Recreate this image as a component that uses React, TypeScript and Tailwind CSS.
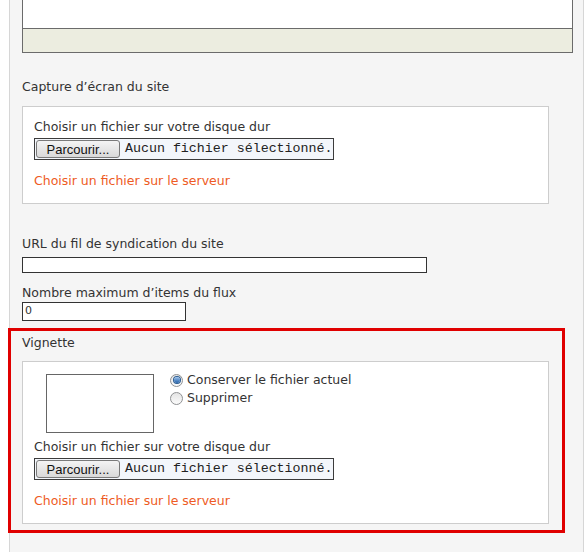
import React from 'react';

function Radio({ checked }: { checked?: boolean }) {
  return (
    <span className="relative inline-flex h-[13px] w-[13px] shrink-0 items-center justify-center rounded-full border border-[#8f9193] bg-gradient-to-b from-[#e4e4e4] to-[#fbfbfb]">
      {checked && (
        <span className="h-[6px] w-[6px] rounded-full bg-gradient-to-b from-[#9cc3ec] to-[#1f5fa8] ring-1 ring-[#2a5c92]" />
      )}
    </span>
  );
}

function FileInput() {
  return (
    <div className="flex h-[22px] w-[300px] items-center border border-[#3c3c3c] bg-[#f3f6fb]">
      <button className="ml-px flex h-[18px] w-[84px] items-center justify-center rounded-[3px] border border-[#7a7a7a] bg-gradient-to-b from-[#f4f4f4] to-[#d9d9d9] font-['Liberation_Sans',Arial,sans-serif] text-[13px] leading-none text-[#111]">
        Parcourir...
      </button>
      <span className="ml-[5px] font-['Liberation_Mono',monospace] text-[13.3px] leading-none text-[#222]">
        Aucun fichier sélectionné.
      </span>
    </div>
  );
}

function UploadBlock() {
  return (
    <>
      <div className="leading-4">Choisir un fichier sur votre disque dur</div>
      <div className="mt-[3px]">
        <FileInput />
      </div>
      <div className="mt-[13px] leading-4 text-[#ee5b24]">Choisir un fichier sur le serveur</div>
    </>
  );
}

export default function App() {
  return (
    <div className="h-[552px] w-[586px] overflow-hidden bg-white font-['DejaVu_Sans',Verdana,sans-serif] text-[12.5px] text-[#333]">
      <div className="relative ml-[9px] h-full w-[575px] border-x border-[#d6d6d6] bg-[#f5f5f5] pl-[12px]">
        {/* textarea tail */}
        <div className="w-[551px] border-x border-b border-[#6b6b6b]">
          <div className="h-[28px] bg-white" />
          <div className="h-[24px] border-t border-[#6b6b6b] bg-[#ecede0]" />
        </div>

        <div className="mt-[26px] leading-4">Capture d’écran du site</div>
        <div className="mt-[11px] w-[527px] border border-[#cdcdcd] bg-white pb-[14px] pl-[11px] pt-[12px]">
          <UploadBlock />
        </div>

        <div className="mt-[32px] leading-4">URL du fil de syndication du site</div>
        <div className="mt-[5px] h-[16px] w-[405px] border border-[#333] bg-white" />

        <div className="mt-[12px] leading-4">Nombre maximum d’items du flux</div>
        <div className="mt-px flex h-[19px] w-[164px] items-center border border-[#333] bg-white pl-[2px] text-[11px]">
          0
        </div>

        <div className="mt-[14px] leading-4">Vignette</div>
        <div className="mt-[10px] w-[527px] border border-[#cdcdcd] bg-white pb-[14px] pl-[11px] pt-[12px]">
          <div className="flex items-start pl-[12px]">
            <div className="h-[59px] w-[108px] border border-[#666] bg-white" />
            <div className="ml-[16px] mt-[-3px] flex flex-col">
              <label className="flex h-[18px] items-center gap-[4px]">
                <Radio checked />
                Conserver le fichier actuel
              </label>
              <label className="flex h-[18px] items-center gap-[4px]">
                <Radio />
                Supprimer
              </label>
            </div>
          </div>
          <div className="mt-[6px]">
            <UploadBlock />
          </div>
        </div>

        {/* highlight annotation */}
        <div className="absolute left-[-2px] top-[328px] h-[205px] w-[557px] border-[3px] border-[#e00000]" />
      </div>
    </div>
  );
}
